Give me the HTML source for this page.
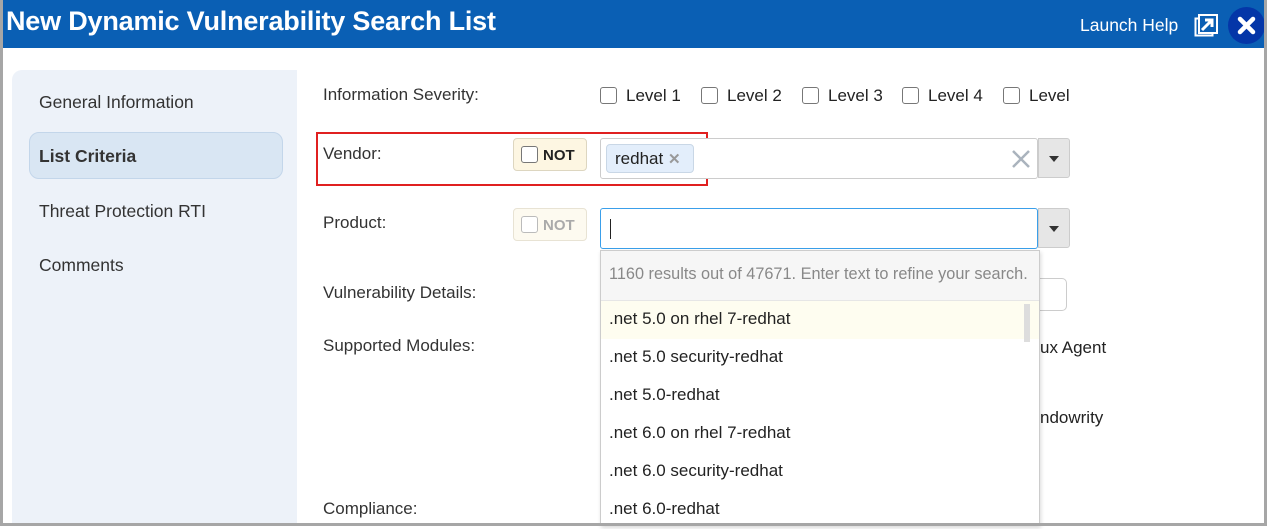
<!DOCTYPE html>
<html><head><meta charset="utf-8"><style>
*{box-sizing:border-box;margin:0;padding:0}
body{width:1267px;height:526px;overflow:hidden;background:#fff;font-family:"Liberation Sans",Arial,sans-serif;position:relative}
.frame{position:absolute;left:0;top:0;width:1267px;height:526px;border:3px solid #a6a6a6;border-top:none;border-left:3px solid #a6a6a6}
.hdr{position:absolute;left:0;top:0;width:1267px;height:48px;background:#0a5fb4;color:#fff}
.hdr .t{position:absolute;left:6px;top:6px;font-size:27px;font-weight:bold;letter-spacing:-0.2px}
.hdr .lh{position:absolute;left:1080px;top:15px;font-size:17.5px}
.close{position:absolute;left:1228px;top:7px;width:37px;height:37px;border-radius:50%;background:#0436a8}
.side{position:absolute;left:12px;top:70px;width:285px;height:456px;background:#edf2f9;border-radius:10px 0 0 0}
.side div{position:absolute;left:27px;font-size:17.5px;color:#333}
.sel{position:absolute;left:29px;top:132px;width:254px;height:47px;background:#d9e6f3;border:1px solid #c3d6ea;border-radius:10px}
.lbl{position:absolute;left:323px;font-size:17px;color:#333}
.cb{display:inline-block;width:17px;height:17px;border:1.5px solid #777;border-radius:3px;vertical-align:-3px;margin-right:9px;background:#fff}
.lv{position:absolute;top:86px;font-size:17px;color:#222}
.not{position:absolute;left:513px;width:74px;height:33px;border:1px solid #ddd6c0;border-radius:4px;background:#fdf6e2;font-size:15px;font-weight:bold;padding:7px 0 0 7px;color:#222}
.inp{position:absolute;left:600px;width:438px;height:41px;border:1px solid #ccc;border-radius:3px;background:#fff}
.dd{position:absolute;left:1038px;width:32px;height:40px;background:#e6e6e6;border:1px solid #ccc;border-radius:0 3px 3px 0}
.dd:after{content:"";position:absolute;left:10px;top:17px;border:5px solid transparent;border-top:6px solid #333}
.menu{position:absolute;left:600px;top:250px;width:440px;height:276px;background:#fff;border:1px solid #ccc;box-shadow:1px 2px 4px rgba(0,0,0,.15)}
.menu .info{height:50px;background:#f6f6f6;border-bottom:1px solid #e6e6e6;color:#888;font-size:16.3px;padding:14px 0 0 8px;white-space:nowrap}
.menu .it{height:38px;font-size:17px;color:#222;padding:8px 0 0 8px}
</style></head><body>
<div class="hdr"><div class="t">New Dynamic Vulnerability Search List</div><div class="lh">Launch Help</div>
<svg style="position:absolute;left:1194px;top:14px" width="24" height="24" viewBox="0 0 24 24"><rect x="1.5" y="4.5" width="17" height="17" fill="none" stroke="#fff" stroke-width="2"/><rect x="5" y="1" width="18" height="18" fill="#0a5fb4" stroke="#fff" stroke-width="2"/><path d="M8 16 L18 6 M11 6 H18 V13" stroke="#fff" stroke-width="3" fill="none"/></svg>
<div class="close"><svg width="37" height="37" viewBox="0 0 37 37"><path d="M12 12 L25 25 M25 12 L12 25" stroke="#fff" stroke-width="4.5" stroke-linecap="round"/></svg></div></div>
<div class="side"><div style="top:22px">General Information</div><div style="top:131px">Threat Protection RTI</div><div style="top:185px">Comments</div></div>
<div class="sel"></div><div style="position:absolute;left:39px;top:146px;font-size:17.5px;font-weight:bold;color:#333">List Criteria</div>
<div class="lbl" style="top:85px">Information Severity:</div>
<div class="lv" style="left:600px"><span class="cb"></span>Level 1</div>
<div class="lv" style="left:701px"><span class="cb"></span>Level 2</div>
<div class="lv" style="left:802px"><span class="cb"></span>Level 3</div>
<div class="lv" style="left:902px"><span class="cb"></span>Level 4</div>
<div class="lv" style="left:1003px"><span class="cb"></span>Level</div>
<div style="position:absolute;left:316px;top:132px;width:392px;height:54px;border:2px solid #e02020"></div>
<div class="lbl" style="top:144px">Vendor:</div>
<div class="not" style="top:138px"><span class="cb" style="margin-right:5px"></span>NOT</div>
<div class="inp" style="top:138px"><div style="position:absolute;left:5px;top:5px;height:29px;width:88px;background:#e3eefb;border:1px solid #c9d7e6;border-radius:4px;font-size:17px;padding:4px 0 0 8px;color:#222">redhat <span style="color:#999;font-weight:bold;font-size:15px">✕</span></div>
<svg style="position:absolute;left:410px;top:10px" width="20" height="20"><path d="M2 2 L18 18 M18 2 L2 18" stroke="#aab3bd" stroke-width="2.5"/></svg></div>
<div class="dd" style="top:138px"></div>
<div class="lbl" style="top:213px">Product:</div>
<div class="not" style="top:208px;color:#aaa;background:#fdfaf0;border-color:#e8e3d4"><span class="cb" style="margin-right:5px;border-color:#bbb"></span>NOT</div>
<div class="inp" style="top:208px;border-color:#3a9fea"><div style="position:absolute;left:9px;top:10px;width:1px;height:20px;background:#222"></div></div>
<div class="dd" style="top:208px"></div>
<div class="lbl" style="top:283px">Vulnerability Details:</div>
<div style="position:absolute;left:1030px;top:278px;width:37px;height:33px;border:1px solid #ccc;border-radius:0 5px 5px 0"></div>
<div class="lbl" style="top:336px">Supported Modules:</div>
<div class="lbl" style="left:1040px;top:338px;font-size:17px;color:#222">ux Agent</div>
<div class="lbl" style="left:1040px;top:408px;font-size:17px;color:#222">ndowrity</div>
<div class="lbl" style="top:499px">Compliance:</div>
<div class="menu"><div class="info">1160 results out of 47671. Enter text to refine your search.</div>
<div class="it" style="background:#fefdf0">.net 5.0 on rhel 7-redhat</div><div class="it">.net 5.0 security-redhat</div><div class="it">.net 5.0-redhat</div><div class="it">.net 6.0 on rhel 7-redhat</div><div class="it">.net 6.0 security-redhat</div><div class="it">.net 6.0-redhat</div>
<div style="position:absolute;left:423px;top:53px;width:6px;height:38px;background:#ddd"></div></div>
<div class="frame"></div>
</body></html>
